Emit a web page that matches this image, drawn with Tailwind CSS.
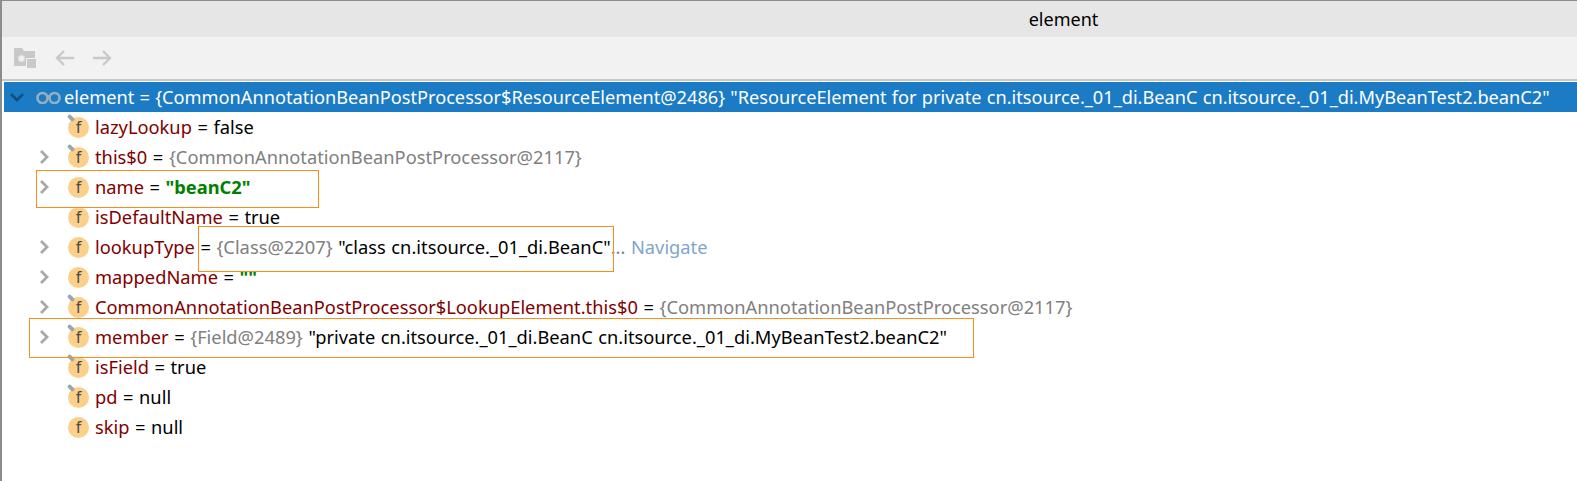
<!DOCTYPE html>
<html>
<head>
<meta charset="utf-8">
<script src="https://cdn.jsdelivr.net/npm/@tailwindcss/browser@4"></script>
</head>
<body class="bg-white">
<div class="relative w-[1577px] h-[481px] overflow-hidden bg-white font-['Noto_Sans',sans-serif] text-[18.3px] text-black border-l-2 border-t border-[#8c8c8c] [word-spacing:0.8px]">
  <div class="h-[36px] bg-[#e6e6e6] flex items-center justify-center pl-[548px] text-[18px]">element</div>
  <div class="h-[42px] bg-[#f2f2f2] flex items-center gap-[17px] pl-[12px]">
    <svg width="24" height="24" viewBox="0 0 24 24"><path d="M0 2h8l2 3h11v7h-9v8H0z" fill="#c9c9c9"/><circle cx="7.500" cy="12.500" r="3.200" fill="#f2f2f2" stroke="#dcdcdc"/><rect x="13" y="13" width="9" height="9" fill="#c9c9c9"/></svg>
    <svg width="20" height="16" viewBox="0 0 20 16" fill="none" stroke="#c9c9c9" stroke-width="2.400"><path d="M19 8H2M9 1 2 8l7 7"/></svg>
    <svg width="20" height="16" viewBox="0 0 20 16" fill="none" stroke="#c9c9c9" stroke-width="2.400"><path d="M1 8h17M11 1l7 7-7 7"/></svg>
  </div>
  <div class="h-[2px] bg-[#c8c8c8]"></div>
  <div class="h-px bg-white"></div>
  <div class="pl-[2px]">
    <div class="h-[30px] bg-[#1b7bc4] text-white flex items-center text-[18.2px] [word-spacing:0.5px]">
      <svg class="ml-[6px]" width="14" height="9" viewBox="0 0 14 9" fill="none" stroke="#12507f" stroke-width="2.800"><path d="M1 1l6 6 6-6"/></svg>
      <svg class="ml-[12px]" width="25" height="13" viewBox="0 0 25 13" fill="none" stroke="#98adbd" stroke-width="2.700"><circle cx="6.500" cy="7" r="5"/><circle cx="18.500" cy="7" r="5"/><path d="M11 5.500h3"/></svg>
      <span class="ml-[3px] pt-[2px] whitespace-pre">element = {CommonAnnotationBeanPostProcessor$ResourceElement@2486} "ResourceElement for private cn.itsource._01_di.BeanC cn.itsource._01_di.MyBeanTest2.beanC2"</span>
    </div>

    <div class="h-[30px] flex items-center pl-[64px]">
      <div class="relative w-[21px] h-[21px] rounded-full bg-[#fbd08b] text-[#4a4a4a] text-[16px] leading-[21px] text-center mr-[6px]">f<span class="absolute -left-[1px] -top-[1px] w-[8px] h-[4px] rounded-full bg-[#9aa7b0] rotate-[45deg]"></span></div>
      <span class="whitespace-pre"><span class="text-[#7f0000]">lazyLookup</span> = false</span>
    </div>

    <div class="h-[30px] flex items-center pl-[36px]">
      <svg class="mr-[19px]" width="9" height="14" viewBox="0 0 9 14" fill="none" stroke="#a8a8a8" stroke-width="2.800"><path d="M1 1l6 6-6 6"/></svg>
      <div class="relative w-[21px] h-[21px] rounded-full bg-[#fbd08b] text-[#4a4a4a] text-[16px] leading-[21px] text-center mr-[6px]">f<span class="absolute -left-[1px] -top-[1px] w-[8px] h-[4px] rounded-full bg-[#9aa7b0] rotate-[45deg]"></span></div>
      <span class="whitespace-pre"><span class="text-[#7f0000]">this$0</span> = <span class="text-[#808080]">{CommonAnnotationBeanPostProcessor@2117}</span></span>
    </div>

    <div class="h-[30px] flex items-center pl-[36px]">
      <svg class="mr-[19px]" width="9" height="14" viewBox="0 0 9 14" fill="none" stroke="#a8a8a8" stroke-width="2.800"><path d="M1 1l6 6-6 6"/></svg>
      <div class="w-[21px] h-[21px] rounded-full bg-[#fbd08b] text-[#4a4a4a] text-[16px] leading-[21px] text-center mr-[6px]">f</div>
      <span class="whitespace-pre"><span class="text-[#7f0000]">name</span> = <span class="text-[#008000] font-bold">"beanC2"</span></span>
    </div>

    <div class="h-[30px] flex items-center pl-[64px]">
      <div class="w-[21px] h-[21px] rounded-full bg-[#fbd08b] text-[#4a4a4a] text-[16px] leading-[21px] text-center mr-[6px]">f</div>
      <span class="whitespace-pre"><span class="text-[#7f0000]">isDefaultName</span> = true</span>
    </div>

    <div class="h-[30px] flex items-center pl-[36px]">
      <svg class="mr-[19px]" width="9" height="14" viewBox="0 0 9 14" fill="none" stroke="#a8a8a8" stroke-width="2.800"><path d="M1 1l6 6-6 6"/></svg>
      <div class="w-[21px] h-[21px] rounded-full bg-[#fbd08b] text-[#4a4a4a] text-[16px] leading-[21px] text-center mr-[6px]">f</div>
      <span class="whitespace-pre"><span class="text-[#7f0000]">lookupType</span> = <span class="text-[#808080]">{Class@2207}</span> "class cn.itsource._01_di.BeanC"<span class="text-[#808080]">... </span><span class="text-[#7ea6cc]">Navigate</span></span>
    </div>

    <div class="h-[30px] flex items-center pl-[36px]">
      <svg class="mr-[19px]" width="9" height="14" viewBox="0 0 9 14" fill="none" stroke="#a8a8a8" stroke-width="2.800"><path d="M1 1l6 6-6 6"/></svg>
      <div class="w-[21px] h-[21px] rounded-full bg-[#fbd08b] text-[#4a4a4a] text-[16px] leading-[21px] text-center mr-[6px]">f</div>
      <span class="whitespace-pre"><span class="text-[#7f0000]">mappedName</span> = <span class="text-[#008000] font-bold">""</span></span>
    </div>

    <div class="h-[30px] flex items-center pl-[36px]">
      <svg class="mr-[19px]" width="9" height="14" viewBox="0 0 9 14" fill="none" stroke="#a8a8a8" stroke-width="2.800"><path d="M1 1l6 6-6 6"/></svg>
      <div class="relative w-[21px] h-[21px] rounded-full bg-[#fbd08b] text-[#4a4a4a] text-[16px] leading-[21px] text-center mr-[6px]">f<span class="absolute -left-[1px] -top-[1px] w-[8px] h-[4px] rounded-full bg-[#9aa7b0] rotate-[45deg]"></span></div>
      <span class="whitespace-pre"><span class="text-[#7f0000]">CommonAnnotationBeanPostProcessor$LookupElement.this$0</span> = <span class="text-[#808080]">{CommonAnnotationBeanPostProcessor@2117}</span></span>
    </div>

    <div class="h-[30px] flex items-center pl-[36px]">
      <svg class="mr-[19px]" width="9" height="14" viewBox="0 0 9 14" fill="none" stroke="#a8a8a8" stroke-width="2.800"><path d="M1 1l6 6-6 6"/></svg>
      <div class="relative w-[21px] h-[21px] rounded-full bg-[#fbd08b] text-[#4a4a4a] text-[16px] leading-[21px] text-center mr-[6px]">f<span class="absolute -left-[1px] -top-[1px] w-[8px] h-[4px] rounded-full bg-[#9aa7b0] rotate-[45deg]"></span></div>
      <span class="whitespace-pre"><span class="text-[#7f0000]">member</span> = <span class="text-[#808080]">{Field@2489}</span> "private cn.itsource._01_di.BeanC cn.itsource._01_di.MyBeanTest2.beanC2"</span>
    </div>

    <div class="h-[30px] flex items-center pl-[64px]">
      <div class="relative w-[21px] h-[21px] rounded-full bg-[#fbd08b] text-[#4a4a4a] text-[16px] leading-[21px] text-center mr-[6px]">f<span class="absolute -left-[1px] -top-[1px] w-[8px] h-[4px] rounded-full bg-[#9aa7b0] rotate-[45deg]"></span></div>
      <span class="whitespace-pre"><span class="text-[#7f0000]">isField</span> = true</span>
    </div>

    <div class="h-[30px] flex items-center pl-[64px]">
      <div class="relative w-[21px] h-[21px] rounded-full bg-[#fbd08b] text-[#4a4a4a] text-[16px] leading-[21px] text-center mr-[6px]">f<span class="absolute -left-[1px] -top-[1px] w-[8px] h-[4px] rounded-full bg-[#9aa7b0] rotate-[45deg]"></span></div>
      <span class="whitespace-pre"><span class="text-[#7f0000]">pd</span> = null</span>
    </div>

    <div class="h-[30px] flex items-center pl-[64px]">
      <div class="w-[21px] h-[21px] rounded-full bg-[#fbd08b] text-[#4a4a4a] text-[16px] leading-[21px] text-center mr-[6px]">f</div>
      <span class="whitespace-pre"><span class="text-[#7f0000]">skip</span> = null</span>
    </div>
  </div>

  <div class="absolute left-[34px] top-[169px] w-[283px] h-[38px] border border-[#ff8c1a]"></div>
  <div class="absolute left-[196px] top-[225px] w-[416px] h-[46px] border border-[#ff8c1a]"></div>
  <div class="absolute left-[27px] top-[317px] w-[945px] h-[40px] border border-[#ff8c1a]"></div>
</div>
</body>
</html>
